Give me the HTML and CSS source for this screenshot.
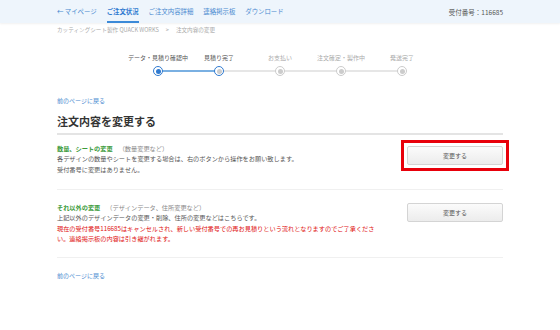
FILE: index.html
```html
<!DOCTYPE html>
<html lang="ja">
<head>
<meta charset="utf-8">
<link rel="stylesheet" href="styles.css">
</head>
<body>
<header class="topbar">
  <div class="wrap topbar-inner">
    <nav class="nav">
      <a class="nav-item">← マイページ</a>
      <a class="nav-item active">ご注文状況</a>
      <a class="nav-item">ご注文内容詳細</a>
      <a class="nav-item">連絡掲示板</a>
      <a class="nav-item">ダウンロード</a>
    </nav>
    <div class="receipt">受付番号：116685</div>
  </div>
</header>
<main class="wrap">
  <div class="crumbs">カッティングシート製作 QUACK WORKS<span class="sep">&gt;</span>注文内容の変更</div>
  <ol class="steps">
    <li class="step done current"><span class="label">データ・見積り確認中</span><span class="dot"></span></li>
    <li class="step done"><span class="label">見積り完了</span><span class="dot"></span></li>
    <li class="step"><span class="label">お支払い</span><span class="dot"></span></li>
    <li class="step"><span class="label">注文確定・製作中</span><span class="dot"></span></li>
    <li class="step last"><span class="label">発送完了</span><span class="dot"></span></li>
  </ol>
  <a class="back">前のページに戻る</a>
  <h1 class="title">注文内容を変更する</h1>
  <section class="row first">
    <div class="text">
      <p class="head"><b>数量、シートの変更</b><span class="note">（数量変更など）</span></p>
      <p>各デザインの数量やシートを変更する場合は、右のボタンから操作をお願い致します。</p>
      <p>受付番号に変更はありません。</p>
    </div>
    <div class="btn-box highlight"><button class="btn">変更する</button></div>
  </section>
  <section class="row second">
    <div class="text">
      <p class="head"><b>それ以外の変更</b><span class="note">（デザインデータ、住所変更など）</span></p>
      <p>上記以外のデザインデータの変更・削除、住所の変更などはこちらです。</p>
      <p class="warn">現在の受付番号116685はキャンセルされ、新しい受付番号での再お見積りという流れとなりますのでご了承ください。連絡掲示板の内容は引き継がれます。</p>
    </div>
    <div class="btn-box"><button class="btn">変更する</button></div>
  </section>
  <a class="back bottom">前のページに戻る</a>
</main>
</body>
</html>
```
FILE: styles.css
```css
* { box-sizing: border-box; margin: 0; padding: 0; }
body {
  font-family: "Noto Sans CJK JP", "Noto Sans", sans-serif;
  color: #555;
  background: #fff;
  width: 560px;
  height: 330px;
  overflow: hidden;
}
.wrap { width: 446px; margin: 0 auto; }
.topbar {
  background: #eef5fc;
  height: 23px;
  box-shadow: 0 1px 2px rgba(0,0,0,0.06);
}
.topbar-inner { display: flex; justify-content: space-between; align-items: stretch; height: 23px; }
.nav { display: flex; gap: 10px; height: 23px; }
.nav-item {
  font-size: 6.4px;
  color: #4a8ad0;
  display: flex;
  align-items: center;
  height: 23px;
  border-bottom: 2px solid transparent;
  padding-top: 1px;
}
.nav-item.active { color: #2f7ad0; font-weight: bold; border-bottom-color: #3c8ad8; }
.receipt { font-size: 6.5px; color: #555; display: flex; align-items: center; }
.crumbs { font-size: 5.6px; color: #aaa; margin-top: 3px; height: 9px; line-height: 9px; }
.crumbs .sep { margin: 0 7px; }
.steps {
  list-style: none;
  display: flex;
  justify-content: center;
  margin-top: 18px;
}
.step {
  width: 61px;
  display: flex;
  flex-direction: column;
  align-items: center;
  position: relative;
}
.step .label { font-size: 6px; color: #aaa; height: 10px; line-height: 10px; white-space: nowrap; }
.step.done .label { color: #555; }
.step::after {
  content: "";
  position: absolute;
  left: 50%;
  width: 61px;
  top: 17px;
  height: 2px;
  background: #e6e6e6;
}
.step.current::after { background: #7ab0e2; }
.step.last::after { display: none; }
.dot {
  margin-top: 3px;
  width: 10px;
  height: 10px;
  border-radius: 50%;
  border: 1.5px solid #ccc;
  background: #fff;
  position: relative;
  z-index: 1;
  display: flex;
  align-items: center;
  justify-content: center;
}
.dot::before {
  content: "";
  width: 5px;
  height: 5px;
  border-radius: 50%;
  background: #ccc;
}
.step.done .dot { border-color: #2f7ad0; }
.step.current .dot::before { background: #2f7ad0; }
.back { display: block; font-size: 6px; color: #4a8ad0; margin-top: 20px; line-height: 10px; }
.title {
  font-size: 11px;
  font-weight: bold;
  color: #333;
  margin-top: 7px;
  padding-bottom: 4px;
  border-bottom: 2px solid #e4e4e4;
  line-height: 16px;
}
.row {
  display: flex;
  justify-content: space-between;
  align-items: flex-start;
  border-bottom: 1px solid #f0f0f0;
}
.row.first { padding-top: 9px; height: 55px; }
.row.second { padding-top: 13px; height: 68px; }
.text { width: 324px; font-size: 6.2px; line-height: 10.4px; color: #555; }
.head b { color: #3a9a3a; font-weight: bold; }
.note { color: #888; margin-left: 6px; }
.warn { color: #e01010; }
.btn-box { padding: 3px; border: 3px solid transparent; margin-right: -6px; }
.row.first .btn-box { margin-top: -4px; }
.row.second .btn-box { margin-top: -6px; }
.btn-box.highlight { border-color: #e8000b; }
.btn {
  width: 96px;
  height: 19px;
  font-family: inherit;
  font-size: 6px;
  color: #555;
  background: linear-gradient(#fbfbfb, #ececec);
  border: 1px solid #d4d4d4;
  border-radius: 2px;
  display: block;
}
.back.bottom { margin-top: 13px; }
```
